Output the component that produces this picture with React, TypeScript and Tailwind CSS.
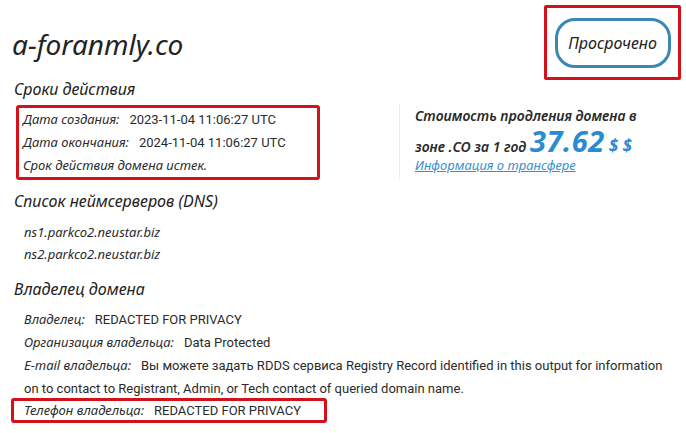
import React from "react";

const head = "font-['Noto_Sans',sans-serif] italic";
const val = "font-['Roboto',sans-serif] not-italic";

function Row({ label, value }: { label: string; value: string }) {
  return (
    <div className="leading-[23px] text-[13px] text-[#2b2b2b]">
      <span className={`${head} text-[13px]`}>{label}:</span>
      <span className={`${val} ml-[10px]`}>{value}</span>
    </div>
  );
}

export default function App() {
  return (
    <div className="w-[686px] h-[433px] bg-white text-[#222] overflow-hidden">
      {/* header */}
      <div className="flex items-center justify-between pl-[12px] pr-[5px] pt-[5px]">
        <h1 className={`${head} text-[28px] leading-[32px] text-[#232323] mt-[2px]`}>a-foranmly.co</h1>
        <div className="w-[137px] h-[75px] border-[3px] border-[#d4111b] rounded-[2px] flex items-center justify-center">
          <div className="w-[116px] h-[50px] border-[3px] border-[#3b87b6] rounded-[20px] flex items-center justify-center">
            <span className={`${head} text-[16px] text-[#222]`}>Просрочено</span>
          </div>
        </div>
      </div>

      {/* validity */}
      <div className="flex">
        <div className="w-[320px] pl-[14px]">
          <h2 className={`${head} text-[16px] leading-[18px]`}>Сроки действия</h2>
          <div className="mt-[7px] ml-[2px] w-[304px] border-[3px] border-[#d4111b] rounded-[3px] pl-[4px]">
            <Row label="Дата создания" value="2023-11-04 11:06:27 UTC" />
            <Row label="Дата окончания" value="2024-11-04 11:06:27 UTC" />
            <div className={`${head} leading-[23px] text-[13px] text-[#2b2b2b]`}>Срок действия домена истек.</div>
          </div>
        </div>
        <div className="ml-[79px] mt-[24px] h-[75px] border-l border-[#ececec] pl-[15px] pt-[2px]">
          <p className={`${head} font-semibold text-[14px] leading-[20px] text-[#2a2a2a]`}>
            Стоимость продления домена в
          </p>
          <p className={`${head} font-semibold text-[14px] leading-[30px] h-[30px] text-[#2a2a2a]`}>
            зоне .CO за 1 год{" "}
            <span className="text-[29px] leading-none font-bold text-[#2b8bd0] tracking-[0.5px]">37.62</span>
            <span className="text-[17px] leading-none font-bold text-[#2b8bd0] ml-[4px]">$ $</span>
          </p>
          <a className={`${head} block text-[13px] leading-[18px] text-[#3a8fcb] underline`} href="#">
            Информация о трансфере
          </a>
        </div>
      </div>

      {/* DNS */}
      <div className="pl-[14px] mt-[10px]">
        <h2 className={`${head} text-[16px] leading-[22px]`}>Список неймсерверов (DNS)</h2>
        <div className={`${head} pl-[10px] mt-[9px] text-[13px] leading-[22px] text-[#2b2b2b]`}>
          <div>ns1.parkco2.neustar.biz</div>
          <div>ns2.parkco2.neustar.biz</div>
        </div>
      </div>

      {/* owner */}
      <div className="pl-[14px] mt-[13px]">
        <h2 className={`${head} text-[16px] leading-[22px]`}>Владелец домена</h2>
        <div className="pl-[10px] pr-[20px] mt-[8px]">
          <Row label="Владелец" value="REDACTED FOR PRIVACY" />
          <Row label="Организация владельца" value="Data Protected" />
          <Row
            label="E-mail владельца"
            value="Вы можете задать RDDS сервиса Registry Record identified in this output for information on to contact to Registrant, Admin, or Tech contact of queried domain name."
          />
        </div>
        <div className="-ml-[3px] w-[316px] border-[3px] border-[#d4111b] rounded-[3px] pl-[10px] -mt-[2px]">
          <div className="leading-[18px] text-[13px] text-[#2b2b2b]">
            <span className={`${head} text-[13px]`}>Телефон владельца:</span>
            <span className={`${val} ml-[10px]`}>REDACTED FOR PRIVACY</span>
          </div>
        </div>
      </div>
    </div>
  );
}
